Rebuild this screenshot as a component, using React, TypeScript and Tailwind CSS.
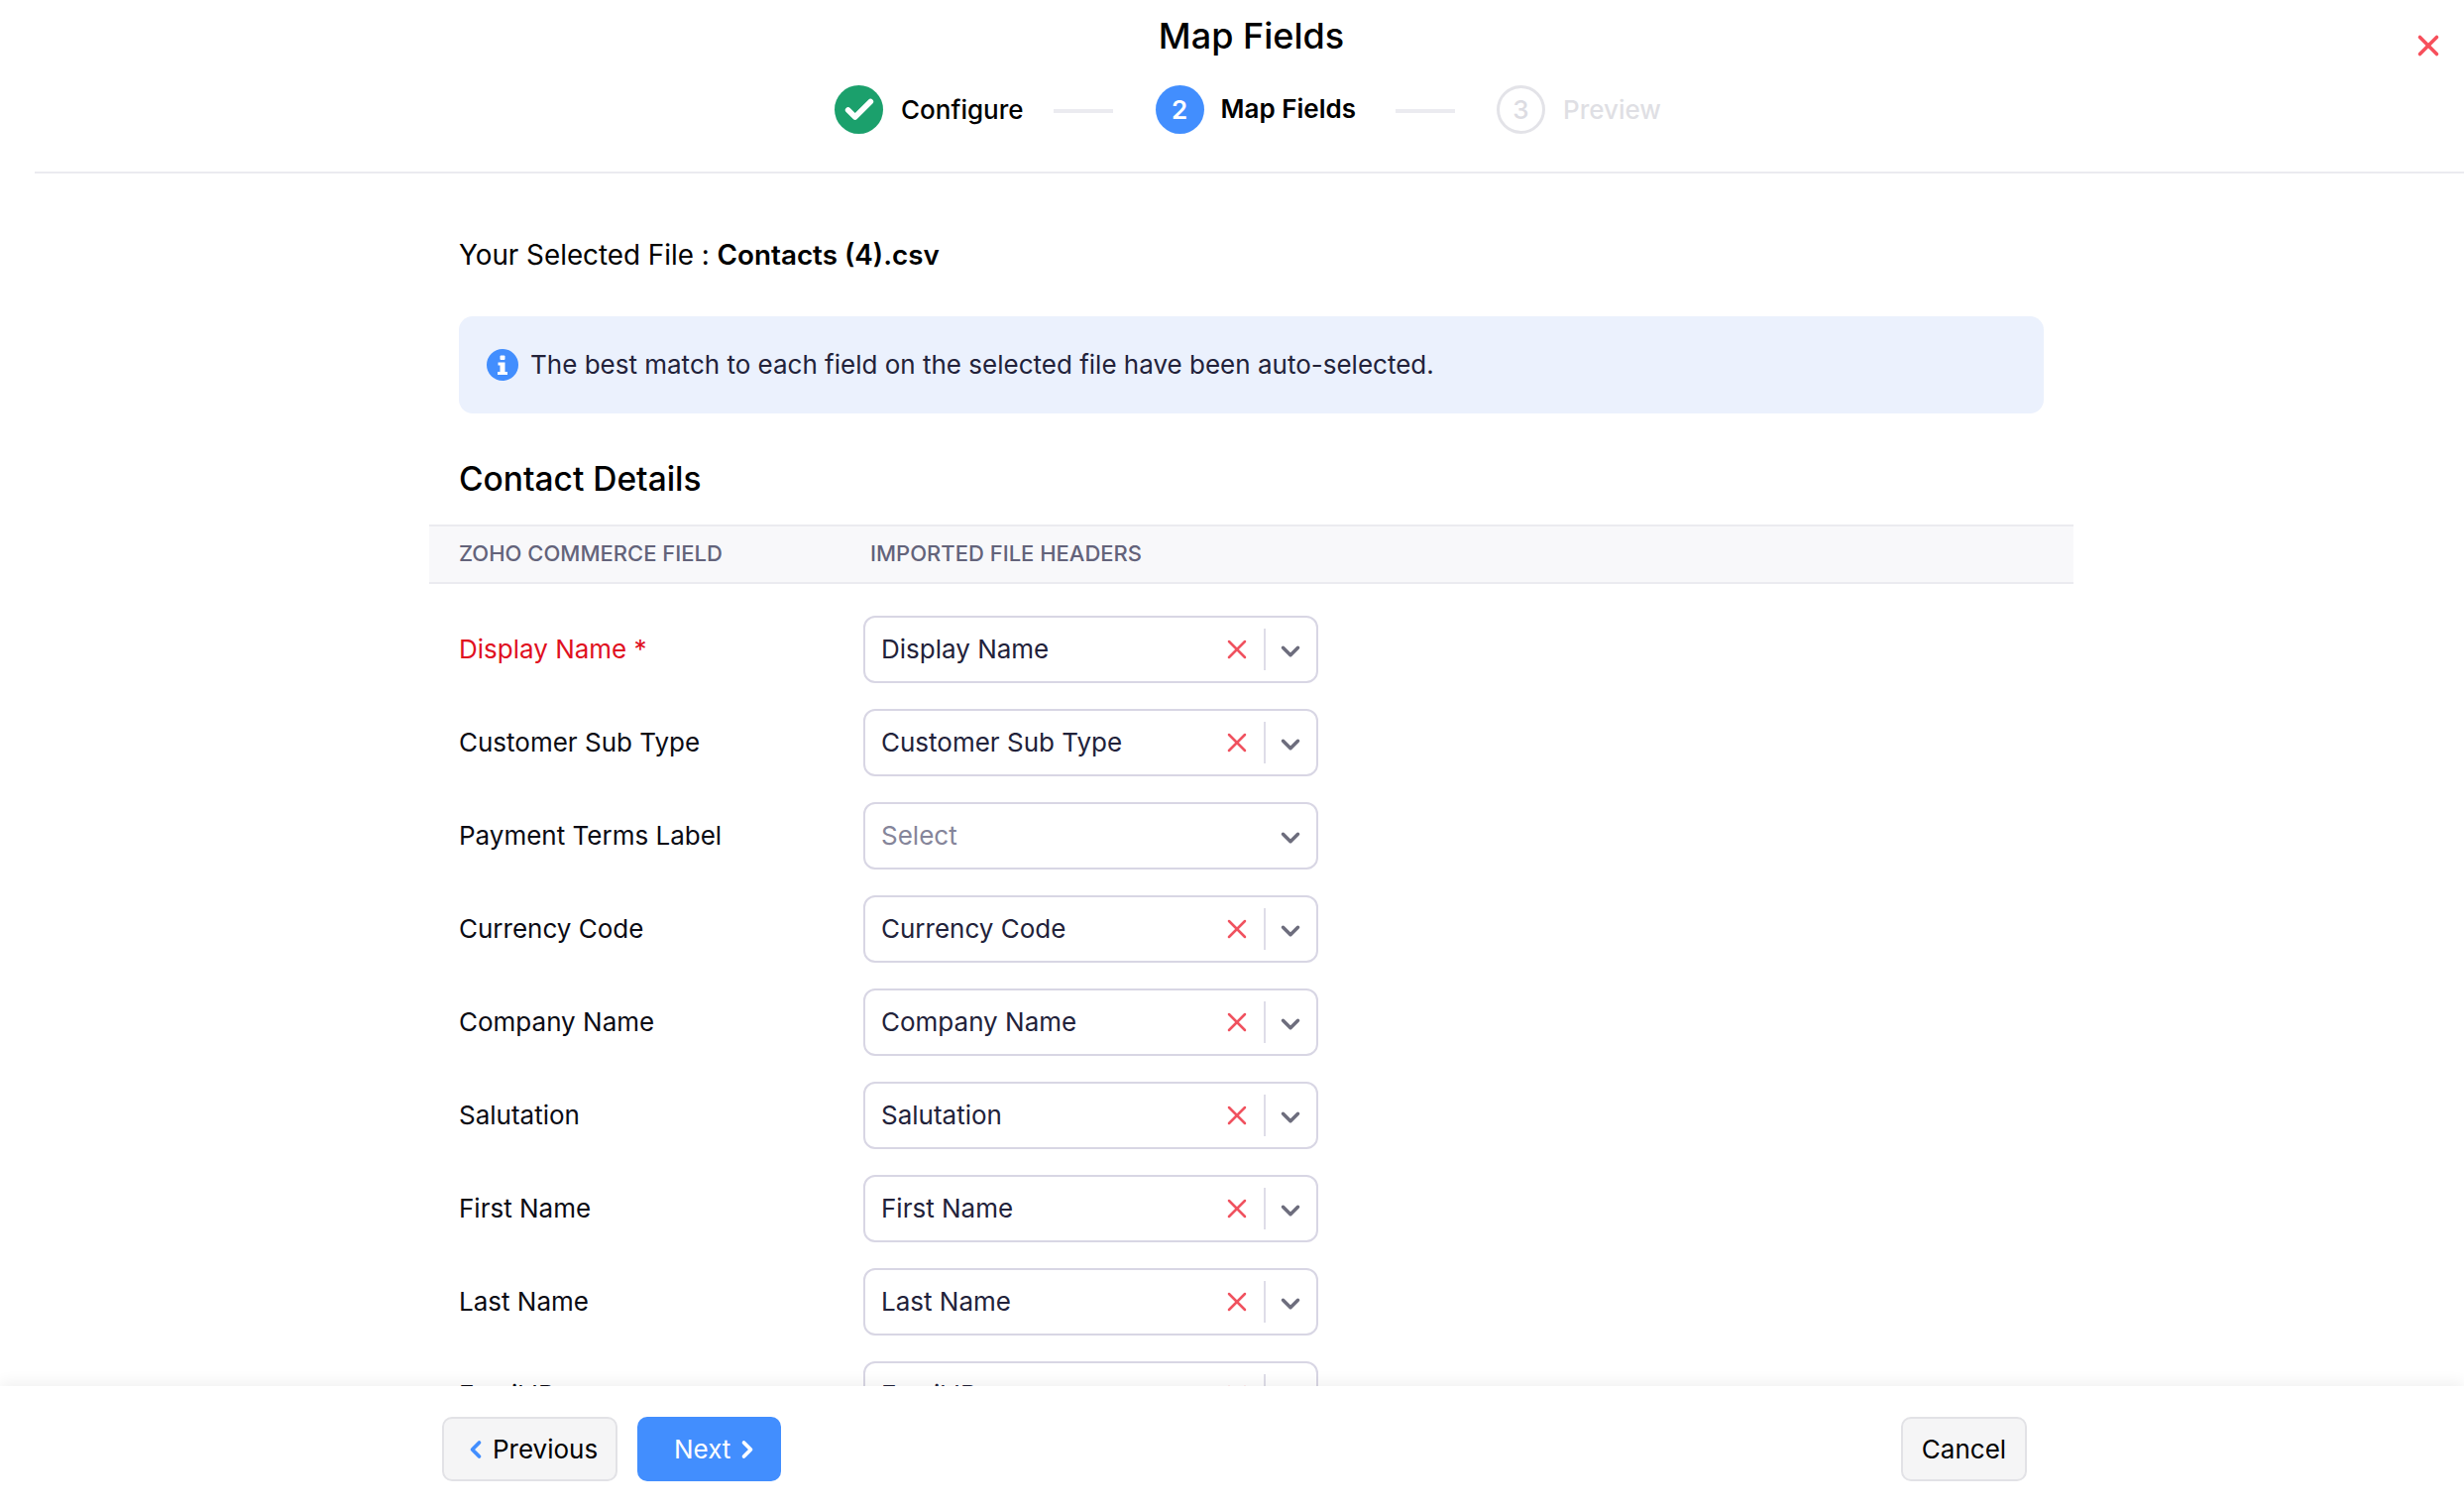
import { Check, ChevronDown, ChevronLeft, ChevronRight, X } from "lucide-react";

const rows = [
  { label: "Display Name", value: "Display Name", required: true },
  { label: "Customer Sub Type", value: "Customer Sub Type" },
  { label: "Payment Terms Label", value: "" },
  { label: "Currency Code", value: "Currency Code" },
  { label: "Company Name", value: "Company Name" },
  { label: "Salutation", value: "Salutation" },
  { label: "First Name", value: "First Name" },
  { label: "Last Name", value: "Last Name" },
  { label: "Email ID", value: "Email ID" },
];

function FieldSelect({ value }: { value: string }) {
  return (
    <div className="flex items-center w-[459px] h-[68px] pl-[16px] pr-[12px] bg-white border-2 border-[#d8d6e4] rounded-[12px] shrink-0">
      {value ? (
        <span className="flex-1 pb-[2px] text-[#22223a]">{value}</span>
      ) : (
        <span className="flex-1 pb-[2px] text-[#85859a]">Select</span>
      )}
      {value && (
        <>
          <X size={32} strokeWidth={1.9} className="text-[#f0525f] shrink-0 translate-x-[1px]" />
          <div className="w-[2px] h-[42px] bg-[#dedde8] ml-[12px] mr-[9px] shrink-0" />
        </>
      )}
      <ChevronDown size={30} strokeWidth={2.8} className="text-[#6d6d7d] shrink-0 mt-[3px] translate-x-[1px]" />
    </div>
  );
}

function FieldRow({ label, value, required }: { label: string; value: string; required?: boolean }) {
  return (
    <div className="flex items-center h-[68px] mb-[26px]">
      <div className={"w-[408px] shrink-0 pb-[2px] " + (required ? "text-[#e0101f]" : "text-[#0b0b14]")}>
        {label}
        {required && " *"}
      </div>
      <FieldSelect value={value} />
    </div>
  );
}

export default function App() {
  return (
    <div
      className="relative flex flex-col h-screen overflow-hidden bg-white text-[26px] text-[#0b0b14]"
      style={{ fontFamily: "Inter, 'Liberation Sans', sans-serif" }}
    >
      {/* Header */}
      <header className="ml-[35px] h-[175px] shrink-0 border-b-2 border-[#ebebf0] flex flex-col items-center">
        <h1 className="mt-[14px] ml-[4px] text-[36px] leading-[44px] font-medium text-black">Map Fields</h1>
        <div className="mt-[27px] mr-[3px] flex items-center">
          <div className="mt-[1px] w-[49px] h-[49px] rounded-full bg-[#1ba06c] flex items-center justify-center">
            <Check size={34} strokeWidth={4} className="text-white" />
          </div>
          <span className="mt-[1px] ml-[18px] font-medium text-black">Configure</span>
          <div className="mt-[3px] ml-[30px] w-[60px] h-[4px] bg-[#ebebf0]" />
          <div className="ml-[43px] w-[49px] h-[49px] rounded-full bg-[#428efe] flex items-center justify-center text-white font-semibold">
            2
          </div>
          <span className="ml-[17px] pb-[2px] font-semibold text-black">Map Fields</span>
          <div className="mt-[3px] ml-[40px] w-[60px] h-[4px] bg-[#ebebf0]" />
          <div className="ml-[42px] w-[49px] h-[49px] rounded-full border-[3px] border-[#e3e3e8] flex items-center justify-center text-[#dcdce2] font-medium">
            3
          </div>
          <span className="ml-[18px] font-medium text-[#dfdfe4]">Preview</span>
        </div>
      </header>
      <X size={34} strokeWidth={2.5} className="absolute top-[29px] right-[19px] text-[#f74f5b]" />

      {/* Scrolling body */}
      <main className="flex-1 overflow-hidden">
        <div className="ml-[433px] w-[1659px]">
          <div className="pl-[30px] pr-[30px]">
            <div className="mt-[60px] leading-[44px] text-[27.8px] text-black">
              Your Selected File : <span className="font-semibold">Contacts (4).csv</span>
            </div>
            <div className="mt-[40px] h-[98px] rounded-[14px] bg-[#ebf1fd] flex items-center pl-[28px]">
              <svg width="32" height="32" viewBox="0 0 32 32" className="shrink-0">
                <circle cx="16" cy="16" r="16" fill="#428efe" />
                <rect x="13.5" y="6.5" width="5" height="4.5" rx="1" fill="#fff" />
                <path d="M11.5 13.5h7v9.5h2.5v3H11v-3h2.5v-6.5h-2z" fill="#fff" />
              </svg>
              <span className="ml-[12px] pb-[2px] text-[#22223a]">The best match to each field on the selected file have been auto-selected.</span>
            </div>
            <h2 className="mt-[44px] text-[33.5px] leading-[44px] font-medium text-black">Contact Details</h2>
          </div>

          <div className="mt-[24px] h-[60px] flex items-center pl-[30px] pb-[1px] bg-[#f8f8fa] border-y-2 border-[#ebebf0] text-[22px] font-medium text-[#63637a] uppercase">
            <div className="w-[415px]">Zoho Commerce Field</div>
            <div>Imported File Headers</div>
          </div>

          <div className="pl-[30px] pt-[32px]">
            {rows.map((r) => (
              <FieldRow key={r.label} {...r} />
            ))}
          </div>
        </div>
      </main>

      {/* Footer */}
      <footer className="relative h-[126px] shrink-0 bg-white shadow-[0_-4px_14px_rgba(0,0,0,0.06)] flex items-start pt-[31px] pl-[446px] pr-[441px]">
        <button className="flex items-center h-[65px] w-[177px] pl-[18px] rounded-[10px] bg-[#f5f5f6] border-2 border-[#e2e2e6] text-black">
          <ChevronLeft size={28} strokeWidth={3.2} className="text-[#428efe] mr-[3px]" />
          Previous
        </button>
        <button className="ml-[20px] flex items-center h-[65px] w-[145px] pl-[37px] rounded-[10px] bg-[#428efe] text-white">
          Next
          <ChevronRight size={28} strokeWidth={3.2} className="ml-[3px]" />
        </button>
        <button className="ml-auto h-[65px] w-[127px] rounded-[10px] bg-[#f5f5f6] border-2 border-[#e2e2e6] text-black">
          Cancel
        </button>
      </footer>
    </div>
  );
}
